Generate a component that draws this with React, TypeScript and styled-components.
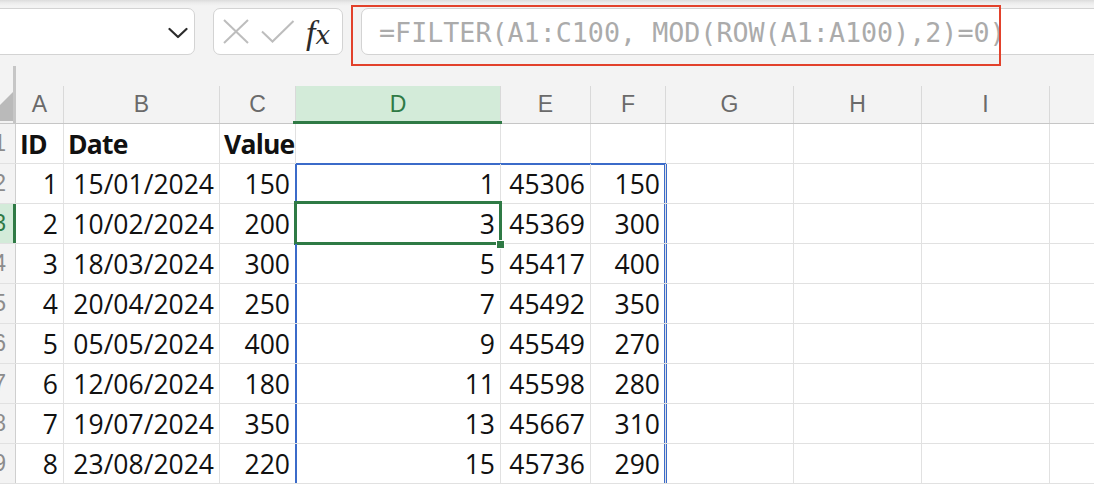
import React from "react";
import styled, { createGlobalStyle, css } from "styled-components";

const COLS = "16px 48px 156px 76px 205px 90px 75px 128px 128px 128px 128px";
const GREEN = "#2f7a45";
const BLUE = "#3b6bc9";

const LETTERS = ["A", "B", "C", "D", "E", "F", "G", "H", "I", ""];

type CellData = { text: string; bold?: boolean; align?: "left" | "right" };

const header: CellData[] = [
    { text: "ID", bold: true, align: "left" },
    { text: "Date", bold: true, align: "left" },
    { text: "Value", bold: true, align: "left" },
];

const source = [
    ["1", "15/01/2024", "150", "1", "45306", "150"],
    ["2", "10/02/2024", "200", "3", "45369", "300"],
    ["3", "18/03/2024", "300", "5", "45417", "400"],
    ["4", "20/04/2024", "250", "7", "45492", "350"],
    ["5", "05/05/2024", "400", "9", "45549", "270"],
    ["6", "12/06/2024", "180", "11", "45598", "280"],
    ["7", "19/07/2024", "350", "13", "45667", "310"],
    ["8", "23/08/2024", "220", "15", "45736", "290"],
];

const GlobalStyle = createGlobalStyle`
    html, body {
        margin: 0;
        padding: 0;
        background: #ffffff;
        overflow: hidden;
    }
    #root {
        width: 1094px;
        height: 484px;
        overflow: hidden;
    }
`;

const App = () => {
    return <StyledPage>
        <GlobalStyle />
        <StyledFormulaBar>
            <StyledNameBox>
                <svg width="20" height="12" viewBox="0 0 20 12">
                    <polyline points="1.5,2 10,10 18.5,2" fill="none" stroke="#2b2b2b" strokeWidth="2.2" strokeLinecap="round" strokeLinejoin="round" />
                </svg>
            </StyledNameBox>
            <StyledIconBox>
                <svg width="26" height="25" viewBox="0 0 26 25">
                    <line x1="1" y1="1" x2="25" y2="24" stroke="#bdbdbd" strokeWidth="2" />
                    <line x1="25" y1="1" x2="1" y2="24" stroke="#bdbdbd" strokeWidth="2" />
                </svg>
                <svg width="34" height="24" viewBox="0 0 34 24">
                    <polyline points="1,11.5 11.5,21.5 32.5,1" fill="none" stroke="#bdbdbd" strokeWidth="2" />
                </svg>
                <StyledFx><i>f</i><span>x</span></StyledFx>
            </StyledIconBox>
            <StyledFormulaInput>=FILTER(A1:C100, MOD(ROW(A1:A100),2)=0)</StyledFormulaInput>
            <StyledAnnotation />
        </StyledFormulaBar>
        <StyledSheet>
            <StyledStrip>
                <StyledStripCorner />
            </StyledStrip>
            <StyledHeaderRow>
                <StyledCorner>
                    <svg width="14" height="30" viewBox="0 0 14 30">
                        <polygon points="14,0 14,30 0,30 0,14" fill="#bababa" />
                    </svg>
                </StyledCorner>
                {LETTERS.map((l, i) => <StyledColHeader key={i} $selected={l === "D"}>{l}</StyledColHeader>)}
            </StyledHeaderRow>
            <StyledRow>
                <StyledRowHeader>1</StyledRowHeader>
                {LETTERS.map((_, i) => {
                    const c = header[i];
                    return <StyledCell key={i} $bold={c?.bold} $align="left">{c ? c.text : ""}</StyledCell>
                })}
            </StyledRow>
            {source.map((r, ri) => {
                const rowNum = ri + 2;
                return <StyledRow key={rowNum}>
                    <StyledRowHeader $selected={rowNum === 3}>{rowNum}</StyledRowHeader>
                    {LETTERS.map((_, ci) => (
                        <StyledCell
                            key={ci}
                            $align="right"
                            $spillLeft={ci === 3}
                            $spillRight={ci === 5}
                            $spillTop={ri === 0 && ci >= 3 && ci <= 5}
                            $active={rowNum === 3 && ci === 3}
                        >
                            {r[ci] ?? ""}
                            {rowNum === 3 && ci === 3 ? <StyledFillHandle /> : null}
                        </StyledCell>
                    ))}
                </StyledRow>
            })}
        </StyledSheet>
    </StyledPage>
}
export default App;

const StyledPage = styled.div`
    width: 1094px;
    height: 484px;
    overflow: hidden;
    display: flex;
    flex-direction: column;
    background: #ffffff;
`
const StyledFormulaBar = styled.div`
    position: relative;
    flex: 0 0 66px;
    box-sizing: border-box;
    padding-top: 8px;
    display: flex;
    align-items: flex-start;
    background: linear-gradient(#dcdcdc 0, #ececec 3px, #f3f3f3 6px);
`
const StyledNameBox = styled.div`
    flex: 0 0 215px;
    margin-left: -20px;
    height: 47px;
    box-sizing: border-box;
    border: 1px solid #d3d3d3;
    border-radius: 7px;
    background: #ffffff;
    display: flex;
    align-items: center;
    justify-content: flex-end;
    padding: 2px 6px 0 0;
`
const StyledIconBox = styled.div`
    flex: 0 0 130px;
    margin-left: 18px;
    height: 47px;
    box-sizing: border-box;
    border: 1px solid #d3d3d3;
    border-radius: 7px;
    background: #ffffff;
    display: flex;
    align-items: center;
    gap: 12px;
    padding: 0 0 0 9px;
`
const StyledFx = styled.span`
    font-family: "DejaVu Serif", "Liberation Serif", serif;
    color: #2b2b2b;
    display: flex;
    align-items: baseline;
    line-height: 1;
    margin: 2px 0 0 -1px;
    i {
        font-size: 34px;
        font-style: italic;
        font-family: "Liberation Serif", serif;
    }
    span {
        font-size: 26px;
        font-style: italic;
        margin-left: 0;
    }
`
const StyledFormulaInput = styled.div`
    flex: 1 0 auto;
    margin-left: 18px;
    margin-right: -20px;
    height: 47px;
    box-sizing: border-box;
    border: 1px solid #d3d3d3;
    border-radius: 7px;
    background: #ffffff;
    padding: 1px 0 0 17px;
    display: flex;
    align-items: center;
    font-family: "DejaVu Sans Mono", "Liberation Mono", monospace;
    font-size: 26.7px;
    color: #ababab;
    white-space: nowrap;
    overflow: hidden;
`
const StyledAnnotation = styled.div`
    position: absolute;
    left: 351px;
    top: 5px;
    width: 650px;
    height: 61px;
    box-sizing: border-box;
    border: 2px solid #e2412b;
    pointer-events: none;
`
const StyledSheet = styled.div`
    flex: 1;
    display: flex;
    flex-direction: column;
`
const StyledStrip = styled.div`
    display: grid;
    grid-template-columns: ${COLS};
    height: 20px;
    background: #f3f3f3;
`
const StyledStripCorner = styled.div`
    border-right: 3px solid #c6c6c6;
`
const StyledHeaderRow = styled.div`
    display: grid;
    grid-template-columns: ${COLS};
    height: 38px;
    box-sizing: border-box;
    background: #f3f3f3;
    border-bottom: 1px solid #c6c6c6;
`
const StyledCorner = styled.div`
    border-right: 3px solid #c6c6c6;
    display: flex;
    align-items: flex-end;
    justify-content: flex-end;
    overflow: hidden;
    padding-bottom: 2px;
    svg {
        margin-right: -1px;
    }
`
const StyledColHeader = styled.div<{ $selected?: boolean }>`
    position: relative;
    border-right: 1px solid #d9d9d9;
    display: flex;
    align-items: center;
    justify-content: center;
    font-family: "Liberation Sans", Arial, sans-serif;
    font-size: 23px;
    color: #6a6a6a;
    ${p => p.$selected && css`
        background: #d3ebd9;
        color: ${GREEN};
        &::after {
            content: "";
            position: absolute;
            left: -3px;
            right: -2px;
            bottom: -1px;
            height: 3px;
            background: ${GREEN};
        }
    `}
`
const StyledRow = styled.div`
    display: grid;
    grid-template-columns: ${COLS};
    height: 40px;
    flex: 0 0 40px;
    box-sizing: border-box;
    border-bottom: 1px solid #e1e1e1;
`
const StyledRowHeader = styled.div<{ $selected?: boolean }>`
    box-sizing: border-box;
    background: #f3f3f3;
    border-right: 1px solid #cfcfcf;
    display: flex;
    align-items: center;
    justify-content: flex-end;
    padding-right: 9px;
    overflow: hidden;
    font-family: "Liberation Sans", Arial, sans-serif;
    font-size: 23px;
    color: #8c8c8c;
    ${p => p.$selected && css`
        background: #d3ebd9;
        color: ${GREEN};
        border-right: 3px solid ${GREEN};
        padding-right: 7px;
    `}
`
const StyledCell = styled.div<{
    $bold?: boolean;
    $align?: "left" | "right";
    $spillLeft?: boolean;
    $spillRight?: boolean;
    $spillTop?: boolean;
    $active?: boolean;
}>`
    position: relative;
    border-right: 1px solid #e1e1e1;
    display: flex;
    align-items: center;
    justify-content: ${p => p.$align === "left" ? "flex-start" : "flex-end"};
    padding: 1px 5px 0 4px;
    font-family: "Open Sans", "Noto Sans", sans-serif;
    font-size: 26.5px;
    line-height: 36px;
    font-weight: ${p => p.$bold ? 700 : 400};
    letter-spacing: ${p => p.$bold ? "-0.8px" : "0"};
    color: #111111;
    white-space: nowrap;
    box-shadow: ${p => {
        const s: string[] = [];
        if (p.$spillLeft) s.push(`inset 1px 0 0 ${BLUE}`, `-1px 0 0 ${BLUE}`);
        if (p.$spillRight) s.push(`inset -1px 0 0 ${BLUE}`, `1px 0 0 ${BLUE}`);
        if (p.$spillTop) s.push(`inset 0 1px 0 ${BLUE}`, `0 -1px 0 ${BLUE}`);
        return s.length ? s.join(", ") : "none";
    }};
    ${p => p.$active && css`
        &::after {
            content: "";
            position: absolute;
            left: -2px;
            right: -2px;
            top: -3px;
            bottom: -2px;
            border: 3px solid ${GREEN};
            pointer-events: none;
        }
    `}
`
const StyledFillHandle = styled.span`
    position: absolute;
    right: -5px;
    bottom: -6px;
    width: 7px;
    height: 7px;
    background: ${GREEN};
    border: 1px solid #ffffff;
    z-index: 2;
`
